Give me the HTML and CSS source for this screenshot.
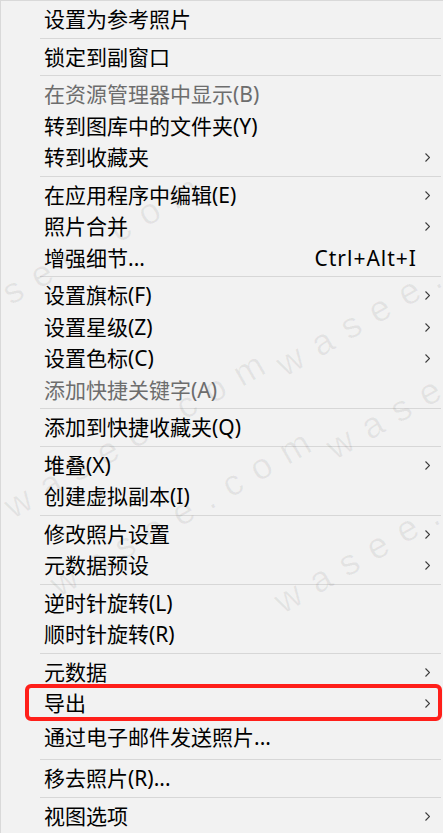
FILE: index.html
```html
<!DOCTYPE html>
<html lang="zh-CN">
<head>
  <meta charset="UTF-8">
  <title>照片右键菜单</title>
  <link rel="stylesheet" href="styles.css">
</head>
<body>

  <div class="menu">

    <div class="group">
      <div class="item"><span class="label">设置为参考照片</span><span class="sub"></span></div>
    </div>
    <div class="sep"></div>

    <div class="group">
      <div class="item"><span class="label">锁定到副窗口</span><span class="sub"></span></div>
    </div>
    <div class="sep"></div>

    <div class="group">
      <div class="item off"><span class="label">在资源管理器中显示(B)</span><span class="sub"></span></div>
      <div class="item"><span class="label">转到图库中的文件夹(Y)</span><span class="sub"></span></div>
      <div class="item"><span class="label">转到收藏夹</span><span class="sub"><svg width="5" height="9" viewBox="0 0 5 9"><polyline points="0.5,0.5 4.5,4.5 0.5,8.5"/></svg></span></div>
    </div>
    <div class="sep"></div>

    <div class="group">
      <div class="item"><span class="label">在应用程序中编辑(E)</span><span class="sub"><svg width="5" height="9" viewBox="0 0 5 9"><polyline points="0.5,0.5 4.5,4.5 0.5,8.5"/></svg></span></div>
      <div class="item"><span class="label">照片合并</span><span class="sub"><svg width="5" height="9" viewBox="0 0 5 9"><polyline points="0.5,0.5 4.5,4.5 0.5,8.5"/></svg></span></div>
      <div class="item"><span class="label">增强细节...</span><span class="key">Ctrl+Alt+I</span><span class="sub"></span></div>
    </div>
    <div class="sep"></div>

    <div class="group">
      <div class="item"><span class="label">设置旗标(F)</span><span class="sub"><svg width="5" height="9" viewBox="0 0 5 9"><polyline points="0.5,0.5 4.5,4.5 0.5,8.5"/></svg></span></div>
      <div class="item"><span class="label">设置星级(Z)</span><span class="sub"><svg width="5" height="9" viewBox="0 0 5 9"><polyline points="0.5,0.5 4.5,4.5 0.5,8.5"/></svg></span></div>
      <div class="item"><span class="label">设置色标(C)</span><span class="sub"><svg width="5" height="9" viewBox="0 0 5 9"><polyline points="0.5,0.5 4.5,4.5 0.5,8.5"/></svg></span></div>
      <div class="item off"><span class="label">添加快捷关键字(A)</span><span class="sub"></span></div>
    </div>
    <div class="sep"></div>

    <div class="group">
      <div class="item"><span class="label">添加到快捷收藏夹(Q)</span><span class="sub"></span></div>
    </div>
    <div class="sep"></div>

    <div class="group">
      <div class="item"><span class="label">堆叠(X)</span><span class="sub"><svg width="5" height="9" viewBox="0 0 5 9"><polyline points="0.5,0.5 4.5,4.5 0.5,8.5"/></svg></span></div>
      <div class="item"><span class="label">创建虚拟副本(I)</span><span class="sub"></span></div>
    </div>
    <div class="sep"></div>

    <div class="group">
      <div class="item"><span class="label">修改照片设置</span><span class="sub"><svg width="5" height="9" viewBox="0 0 5 9"><polyline points="0.5,0.5 4.5,4.5 0.5,8.5"/></svg></span></div>
      <div class="item"><span class="label">元数据预设</span><span class="sub"><svg width="5" height="9" viewBox="0 0 5 9"><polyline points="0.5,0.5 4.5,4.5 0.5,8.5"/></svg></span></div>
    </div>
    <div class="sep"></div>

    <div class="group">
      <div class="item"><span class="label">逆时针旋转(L)</span><span class="sub"></span></div>
      <div class="item"><span class="label">顺时针旋转(R)</span><span class="sub"></span></div>
    </div>
    <div class="sep"></div>

    <div class="group">
      <div class="item"><span class="label">元数据</span><span class="sub"><svg width="5" height="9" viewBox="0 0 5 9"><polyline points="0.5,0.5 4.5,4.5 0.5,8.5"/></svg></span></div>
      <div class="item mark"><span class="label">导出</span><span class="sub"><svg width="5" height="9" viewBox="0 0 5 9"><polyline points="0.5,0.5 4.5,4.5 0.5,8.5"/></svg></span></div>
      <div class="item after-mark"><span class="label">通过电子邮件发送照片...</span><span class="sub"></span></div>
    </div>
    <div class="sep"></div>

    <div class="group">
      <div class="item"><span class="label">移去照片(R)...</span><span class="sub"></span></div>
    </div>
    <div class="sep"></div>

    <div class="group">
      <div class="item"><span class="label">视图选项</span><span class="sub"><svg width="5" height="9" viewBox="0 0 5 9"><polyline points="0.5,0.5 4.5,4.5 0.5,8.5"/></svg></span></div>
    </div>

    <!-- watermark over the menu -->
    <div class="watermark">
      <span class="wm wm-1">wasee.com</span>
      <span class="wm wm-2">wasee.com</span>
      <span class="wm wm-3">wasee.com</span>
      <span class="wm wm-4">wasee.com</span>
      <span class="wm wm-5">wasee.com</span>
      <span class="wm wm-6">wasee.com</span>
    </div>

  </div>

</body>
</html>
```

FILE: styles.css
```css
body {
  margin: 0;
  background: #f2f2f2;
  font-family: 'Noto Sans', 'Noto Sans CJK SC', sans-serif;
}

.menu {
  position: relative;
  width: 443px;
  height: 833px;
  overflow: hidden;
  box-sizing: border-box;
  background: #f2f2f2;
  border-top: 1px solid #d9d9d9;
  border-left: 1px solid #d9d9d9;
}

.group {
  padding: 3px 0 2px;
}

.item {
  display: flex;
  align-items: center;
  height: 31.5px;
  line-height: 31.5px;
  padding: 0 13px 0 43px;
  font-size: 21px;
  color: #000;
  white-space: nowrap;
}

.item.off {
  color: #6d6d6d;
}

.label {
  flex: 1;
}

.key {
  margin-right: 8px;
  letter-spacing: 1px;
}

.sub {
  width: 5px;
  display: flex;
  align-items: center;
}

.sub polyline {
  fill: none;
  stroke: #3c3c3c;
  stroke-width: 1.1;
}

.sep {
  height: 1px;
  background: #d7d7d7;
  margin: 0 2px 0 39px;
}

/* red annotation frame */
.mark {
  position: relative;
}

.mark::after {
  content: "";
  position: absolute;
  left: 24px;
  right: 1px;
  top: -4.5px;
  bottom: -1px;
  border: 4px solid #ff1f1a;
  border-radius: 6px;
}

.after-mark {
  margin: 2px 0 4px;
}

.watermark {
  position: absolute;
  inset: 0;
  pointer-events: none;
}

.wm {
  position: absolute;
  font-family: 'Liberation Sans', sans-serif;
  font-size: 36px;
  letter-spacing: 14px;
  color: rgba(0, 0, 0, 0.06);
  transform: rotate(-30deg);
  transform-origin: 0 50%;
  white-space: nowrap;
}

.wm-1 { left: -60px; top: 310px; }
.wm-2 { left: 278px; top: 345px; }
.wm-3 { left: 328px; top: 428px; }
.wm-4 { left: 6px; top: 487px; }
.wm-5 { left: 52px; top: 565px; }
.wm-6 { left: 276px; top: 582px; }
```
